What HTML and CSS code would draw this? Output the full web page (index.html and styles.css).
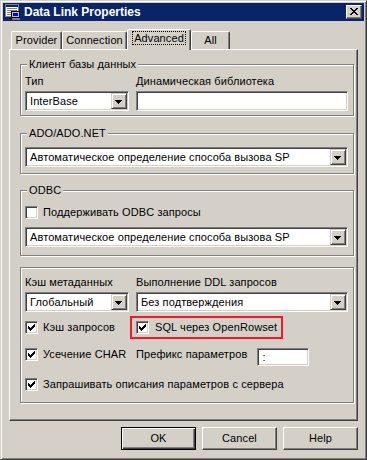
FILE: index.html
```html
<!DOCTYPE html>
<html lang="ru">

<head>
    <meta charset="UTF-8">
    <title>Data Link Properties</title>
    <link rel="stylesheet" href="styles.css">
</head>

<body>
    <div class="window">
        <div class="titlebar">
            <svg class="app-icon" width="16" height="16" viewBox="0 0 16 16" shape-rendering="crispEdges">
                <rect x="0.5" y="0.5" width="13" height="12" fill="#fff" stroke="#808080"/>
                <rect x="1" y="1" width="12" height="2" fill="#0a246a"/>
                <path d="M2 4h10v1H2zM2 6h10v1H2zM2 8h4v1H2zM2 10h4v1H2z" fill="#808080"/>
                <rect x="6.5" y="7.5" width="8" height="6" fill="#c0c0c0" stroke="#000"/>
                <rect x="8" y="9" width="5" height="3" fill="#0000ff"/>
                <rect x="7" y="14" width="8" height="2" fill="#808080"/>
                <rect x="4" y="14" width="3" height="1" fill="#000"/>
            </svg>
            <span class="title">Data Link Properties</span>
            <div class="caption-btn">
                <svg width="8" height="7" viewBox="0 0 8 7" shape-rendering="crispEdges">
                    <path d="M0 0h2v1H0zM6 0h2v1H6zM1 1h2v1H1zM5 1h2v1H5zM2 2h4v1H2zM3 3h2v1H3zM2 4h4v1H2zM1 5h2v1H1zM5 5h2v1H5zM0 6h2v1H0zM6 6h2v1H6z" fill="#000"/>
                </svg>
            </div>
        </div>

        <div class="client">
            <div class="tabs">
                <div class="tab tab-provider">Provider</div>
                <div class="tab tab-connection">Connection</div>
                <div class="tab tab-advanced active"><span class="focus">Advanced</span></div>
                <div class="tab tab-all">All</div>
            </div>

            <div class="panel">
                <fieldset class="group group-client">
                    <legend>Клиент базы данных</legend>
                    <div class="grid">
                        <span class="label">Тип</span>
                        <span class="label">Динамическая библиотека</span>
                        <div class="combo">
                            <span class="value">InterBase</span>
                            <span class="drop"><svg width="7" height="4" viewBox="0 0 7 4" shape-rendering="crispEdges"><path d="M0 0h7v1H0zM1 1h5v1H1zM2 2h3v1H2zM3 3h1v1H3z"/></svg></span>
                        </div>
                        <div class="edit"></div>
                    </div>
                </fieldset>

                <fieldset class="group group-ado">
                    <legend>ADO/ADO.NET</legend>
                    <div class="combo">
                        <span class="value">Автоматическое определение способа вызова SP</span>
                        <span class="drop"><svg width="7" height="4" viewBox="0 0 7 4" shape-rendering="crispEdges"><path d="M0 0h7v1H0zM1 1h5v1H1zM2 2h3v1H2zM3 3h1v1H3z"/></svg></span>
                    </div>
                </fieldset>

                <fieldset class="group group-odbc">
                    <legend>ODBC</legend>
                    <div class="check-row">
                        <span class="checkbox"></span>
                        <span>Поддерживать ODBC запросы</span>
                    </div>
                    <div class="combo">
                        <span class="value">Автоматическое определение способа вызова SP</span>
                        <span class="drop"><svg width="7" height="4" viewBox="0 0 7 4" shape-rendering="crispEdges"><path d="M0 0h7v1H0zM1 1h5v1H1zM2 2h3v1H2zM3 3h1v1H3z"/></svg></span>
                    </div>
                </fieldset>

                <div class="group group-misc">
                    <div class="grid">
                        <span class="label">Кэш метаданных</span>
                        <span class="label">Выполнение DDL запросов</span>
                        <div class="combo">
                            <span class="value">Глобальный</span>
                            <span class="drop"><svg width="7" height="4" viewBox="0 0 7 4" shape-rendering="crispEdges"><path d="M0 0h7v1H0zM1 1h5v1H1zM2 2h3v1H2zM3 3h1v1H3z"/></svg></span>
                        </div>
                        <div class="combo">
                            <span class="value">Без подтверждения</span>
                            <span class="drop"><svg width="7" height="4" viewBox="0 0 7 4" shape-rendering="crispEdges"><path d="M0 0h7v1H0zM1 1h5v1H1zM2 2h3v1H2zM3 3h1v1H3z"/></svg></span>
                        </div>

                        <div class="check-row row-cache">
                            <span class="checkbox checked"><svg width="7" height="7" viewBox="0 0 7 7" shape-rendering="crispEdges"><path d="M0 2h1v3H0zM1 3h1v3H1zM2 4h1v3H2zM3 3h1v3H3zM4 2h1v3H4zM5 1h1v3H5zM6 0h1v3H6z"/></svg></span>
                            <span>Кэш запросов</span>
                        </div>
                        <div class="check-row highlight">
                            <span class="checkbox checked"><svg width="7" height="7" viewBox="0 0 7 7" shape-rendering="crispEdges"><path d="M0 2h1v3H0zM1 3h1v3H1zM2 4h1v3H2zM3 3h1v3H3zM4 2h1v3H4zM5 1h1v3H5zM6 0h1v3H6z"/></svg></span>
                            <span>SQL через OpenRowset</span>
                        </div>

                        <div class="check-row row-char">
                            <span class="checkbox checked"><svg width="7" height="7" viewBox="0 0 7 7" shape-rendering="crispEdges"><path d="M0 2h1v3H0zM1 3h1v3H1zM2 4h1v3H2zM3 3h1v3H3zM4 2h1v3H4zM5 1h1v3H5zM6 0h1v3H6z"/></svg></span>
                            <span>Усечение CHAR</span>
                        </div>
                        <div class="prefix">
                            <span>Префикс параметров</span>
                            <div class="edit small">:</div>
                        </div>

                        <div class="check-row row-params">
                            <span class="checkbox checked"><svg width="7" height="7" viewBox="0 0 7 7" shape-rendering="crispEdges"><path d="M0 2h1v3H0zM1 3h1v3H1zM2 4h1v3H2zM3 3h1v3H3zM4 2h1v3H4zM5 1h1v3H5zM6 0h1v3H6z"/></svg></span>
                            <span>Запрашивать описания параметров с сервера</span>
                        </div>
                    </div>
                </div>
            </div>

            <div class="buttons">
                <div class="btn default">OK</div>
                <div class="btn">Cancel</div>
                <div class="btn">Help</div>
            </div>
        </div>
    </div>
</body>

</html>
```

FILE: styles.css
```css
/* classic windows dialog */
body {
    margin: 0;
    background: #fff;
    font-family: "Liberation Sans", Arial, sans-serif;
    font-size: 11px;
    line-height: 13px;
    letter-spacing: 0.1px;
    color: #000;
}

.window {
    width: 367px;
    height: 460px;
    box-sizing: border-box;
    background: #d4d0c8;
    border: 1px solid;
    border-color: #d4d0c8 #404040 #404040 #d4d0c8;
    box-shadow: inset 1px 1px 0 #fff, inset -1px -1px 0 #808080;
    padding: 2px;
}

.titlebar {
    height: 18px;
    background: #0a246a;
    display: flex;
    align-items: center;
    padding-left: 2px;
}

.app-icon {
    flex: none;
}

.title {
    margin-left: 3px;
    color: #fff;
    font-weight: bold;
    font-size: 12px;
    letter-spacing: 0;
}

.caption-btn {
    margin-left: auto;
    margin-right: 2px;
    width: 16px;
    height: 14px;
    box-sizing: border-box;
    background: #d4d0c8;
    border: 1px solid;
    border-color: #fff #404040 #404040 #fff;
    box-shadow: inset -1px -1px 0 #808080;
    display: flex;
    align-items: center;
    justify-content: center;
    padding: 0 1px 1px 0;
}

.client {
    padding: 8px 6px 7px 6px;
}

/* tabs */
.tabs {
    display: flex;
    align-items: flex-end;
    height: 20px;
    padding-left: 2px;
}

.tab {
    height: 18px;
    box-sizing: border-box;
    border: 1px solid;
    border-bottom: none;
    border-color: #fff #404040 transparent #fff;
    box-shadow: inset -1px 0 0 #808080;
    border-radius: 2px 2px 0 0;
    text-align: center;
    padding-top: 2px;
}

.tab-provider { width: 51px; }
.tab-connection { width: 65px; }
.tab-advanced { width: 64px; }
.tab-all { width: 39px; }

.tab.active {
    height: 21px;
    margin-bottom: -1px;
    position: relative;
    z-index: 1;
    background: #d4d0c8;
}

.focus {
    outline: 1px dotted #000;
    padding: 0 1px;
}

.panel {
    height: 372px;
    box-sizing: border-box;
    border: 1px solid;
    border-color: #fff #404040 #404040 #fff;
    box-shadow: inset -1px -1px 0 #808080;
    padding: 7px 3px 0 10px;
}

/* group boxes */
.group {
    margin: 0;
    padding: 0 5px 0 4px;
    border: 1px solid #808080;
    box-shadow: inset 1px 1px 0 #fff, 1px 1px 0 #fff;
}

.group legend {
    margin-left: 2px;
    padding: 0 2px;
    line-height: 14px;
    background: #d4d0c8;
}

.group-client { padding-top: 4px; padding-bottom: 4px; }
.group-ado { margin-top: 10px; padding-top: 7px; padding-bottom: 6px; }
.group-odbc { margin-top: 9px; padding-top: 9px; padding-bottom: 8px; }
.group-misc { margin-top: 11px; padding-top: 8px; padding-bottom: 11px; }

.grid {
    display: grid;
    grid-template-columns: 104px 1fr;
    column-gap: 7px;
    row-gap: 3px;
    align-items: start;
}

.group-misc .row-cache {
    margin-top: 1px;
    align-self: center;
}

.group-misc .highlight {
    margin-top: 1px;
}

.group-misc .row-char,
.group-misc .prefix {
    margin-top: 6px;
}

.group-misc .row-params {
    grid-column: 1 / 3;
    margin-top: 9px;
}

/* fields */
.combo,
.edit {
    height: 20px;
    box-sizing: border-box;
    background: #fff;
    border: 1px solid;
    border-color: #808080 #fff #fff #808080;
    box-shadow: inset 1px 1px 0 #404040, inset -1px -1px 0 #d4d0c8;
    display: flex;
    align-items: center;
    padding: 1px;
}

.combo .value {
    flex: 1;
    padding-left: 3px;
    white-space: nowrap;
}

.drop {
    width: 16px;
    height: 16px;
    box-sizing: border-box;
    background: #d4d0c8;
    border: 1px solid;
    border-color: #d4d0c8 #404040 #404040 #d4d0c8;
    box-shadow: inset 1px 1px 0 #fff, inset -1px -1px 0 #808080;
    display: flex;
    align-items: center;
    justify-content: center;
    padding: 1px 1px 0 0;
}

.edit.small {
    width: 52px;
    height: 18px;
    padding-left: 4px;
}

.group-odbc .combo {
    margin-top: 8px;
}

/* check boxes */
.check-row {
    display: flex;
    align-items: flex-start;
    gap: 5px;
    white-space: nowrap;
}

.checkbox {
    flex: none;
    width: 13px;
    height: 13px;
    box-sizing: border-box;
    background: #fff;
    border: 1px solid;
    border-color: #808080 #fff #fff #808080;
    box-shadow: inset 1px 1px 0 #404040, inset -1px -1px 0 #d4d0c8;
    padding: 2px;
    display: flex;
}

.checkbox svg {
    fill: #000;
}

.highlight {
    align-items: center;
    justify-self: start;
    margin-left: -6px;
    height: 23px;
    box-sizing: border-box;
    border: 2px solid #ed1c24;
    padding: 0 4px 0 4px;
    gap: 6px;
}

.prefix {
    display: flex;
    align-items: flex-start;
    gap: 10px;
}

/* buttons */
.buttons {
    display: flex;
    justify-content: flex-end;
    gap: 6px;
    margin-top: 6px;
}

.btn {
    width: 75px;
    height: 23px;
    box-sizing: border-box;
    border: 1px solid;
    border-color: #fff #404040 #404040 #fff;
    box-shadow: inset -1px -1px 0 #808080;
    display: flex;
    align-items: center;
    justify-content: center;
}

.btn.default {
    border-color: #000;
    box-shadow: inset 1px 1px 0 #fff, inset -1px -1px 0 #404040, inset -2px -2px 0 #808080;
}
```
